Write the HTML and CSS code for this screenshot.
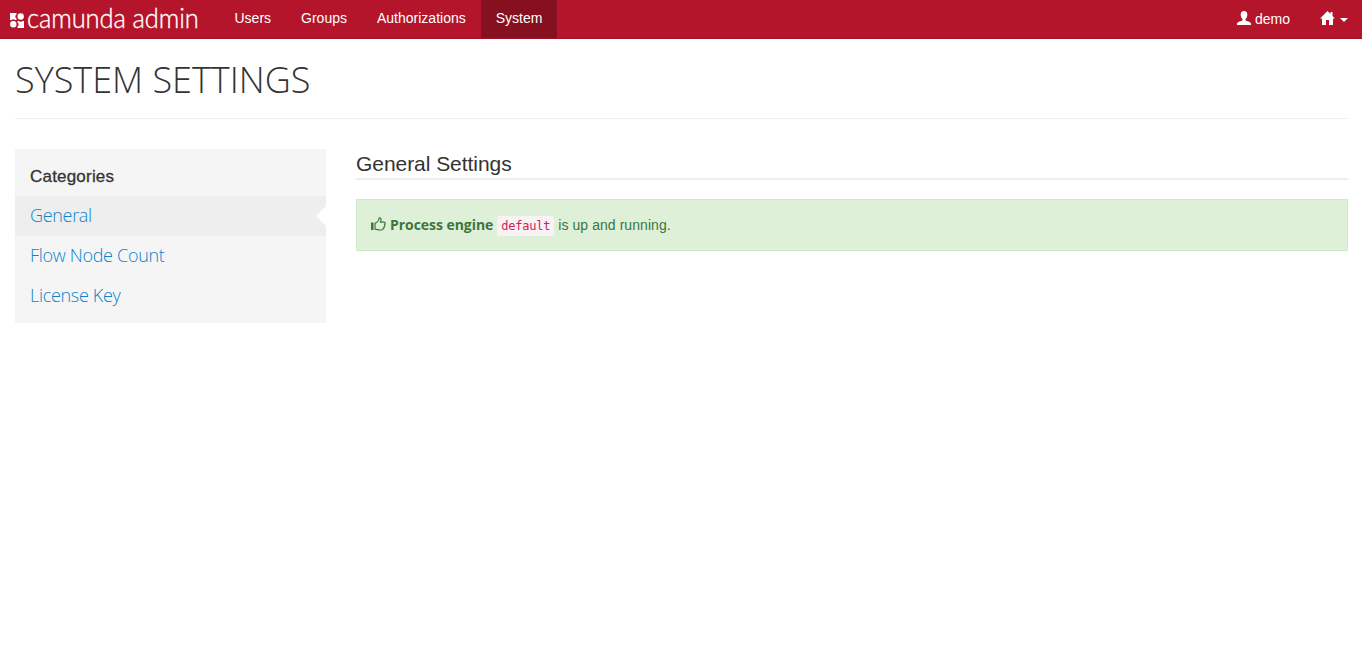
FILE: index.html
```html
<!DOCTYPE html>
<html lang="en">
<head>
<meta charset="utf-8">
<title>camunda admin</title>
<link rel="stylesheet" href="styles.css">
</head>
<body>
<header class="navbar">
  <a class="brand">
    <svg class="brand-mark" viewBox="0 0 14 15" aria-hidden="true">
      <path fill="#fff" d="M0 0h6.500v1.500a2.300 2.300 0 0 0 0 4V7H5A2.500 2.500 0 0 0 1.500 7H0z"/>
      <circle cx="10.700" cy="3.500" r="3.200" fill="#fff"/>
      <circle cx="3.300" cy="11.300" r="3.200" fill="#fff"/>
      <path fill="#fff" d="M7.500 8H9a2.500 2.500 0 0 0 3.500 0H14v7H7.500v-1.500a2.300 2.300 0 0 0 0-4z"/>
    </svg>
    <span class="brand-name">camunda admin</span>
  </a>
  <nav class="nav">
    <a class="nav-link">Users</a>
    <a class="nav-link">Groups</a>
    <a class="nav-link">Authorizations</a>
    <a class="nav-link active">System</a>
  </nav>
  <div class="account">
    <a class="account-link">
      <svg class="icon-user" viewBox="0 0 14 14" aria-hidden="true"><path fill="#fff" d="M7 0C4.800 0 3.700 1.400 3.700 3.500c0 2 .7 3.600 1.800 4.500v1.300C5 10.300 0 10.600 0 12.800V14h14v-1.200c0-2.200-5-2.500-5.500-3.500V8c1.100-.9 1.800-2.500 1.800-4.500C10.300 1.400 9.200 0 7 0z"/></svg>
      <span>demo</span>
    </a>
    <a class="account-link home">
      <svg class="icon-home" viewBox="0 0 15 14" aria-hidden="true"><path fill="#fff" d="M7.500 0 0 7.500h2V14h4V9h3v5h4V7.500h2L12.500 5V1h-2v2z"/></svg>
      <span class="caret"></span>
    </a>
  </div>
</header>
<main class="page">
  <h1 class="page-title">SYSTEM SETTINGS</h1>
  <div class="columns">
    <aside class="sidebar">
      <h5 class="sidebar-title">Categories</h5>
      <a class="sidebar-link active">General</a>
      <a class="sidebar-link">Flow Node Count</a>
      <a class="sidebar-link">License Key</a>
    </aside>
    <section class="content">
      <h3 class="section-title">General Settings</h3>
      <div class="alert">
        <svg class="icon-thumb" viewBox="0 0 15 14" aria-hidden="true"><path fill="#3c763d" d="M0 5.500h2.500V13H0z"/><path fill="none" stroke="#3c763d" stroke-width="1.200" stroke-linejoin="round" d="M4 6.300c1.800-.5 3.900-2.800 4.100-5.200 1.800-.8 2.700 1.300 1.200 4h3.700c1.600 0 1.500 2 .5 2.300.8.800.3 2-.5 2.200.4 1-.2 1.800-.9 1.900 0 1.200-.7 1.500-1.700 1.500H8.500c-1.500 0-2.700-.9-4.500-.9z"/></svg>
        <strong>Process engine</strong>
        <code>default</code>
        <span class="alert-text">is up and running.</span>
      </div>
    </section>
  </div>
</main>
</body>
</html>
```
FILE: styles.css
```css
* { box-sizing: border-box; }
body {
  margin: 0;
  background: #fff;
  color: #333;
  font: 14px/20px "Liberation Sans", Arial, sans-serif;
}
.navbar {
  display: flex;
  height: 39px;
  background: #b5152b;
  border-bottom: 1px solid #a01226;
  color: #fff;
}
.brand {
  display: flex;
  width: 219.500px;
  padding-left: 10px;
}
.brand-mark { width: 14px; height: 15px; margin: 13px 3px 0 0; flex: none; }
.brand-name {
  font: 300 27px/35px Lato, sans-serif;
  letter-spacing: -0.1px;
  white-space: nowrap;
  transform: scaleX(.945);
  transform-origin: 0 0;
  -webkit-text-stroke: .35px #fff;
}
.nav { display: flex; }
.nav-link { padding: 8px 15px 10px; font-size: 14px; }
.nav-link.active { background: #860f20; }
.account { display: flex; margin-left: auto; }
.account-link {
  display: flex;
  gap: 4px;
  padding: 9px 15px;
}
.icon-user { width: 14px; height: 14px; margin-top: 2px; }
.icon-home { width: 15px; height: 14px; margin-top: 2px; }
.home { padding-right: 14px; gap: 5px; }
.caret {
  margin-top: 9px;
  height: 4px;
  border: 4px solid transparent;
  border-top-color: #fff;
  border-bottom: 0;
}
.page { padding: 21px 14px 0 15px; }
.page-title {
  margin: 0 0 30px;
  height: 59px;
  border-bottom: 1px solid #eee;
  font: 300 36px/40px "Open Sans", sans-serif;
}
.columns { display: flex; gap: 30px; }
.sidebar {
  width: 311px;
  height: 174px;
  padding-top: 17px;
  background: #f5f5f5;
}
.sidebar-title {
  margin: 0 0 9px;
  padding-left: 15px;
  font: 500 17px/21px "Liberation Sans", Arial, sans-serif;
  letter-spacing: .2px;
  -webkit-text-stroke: .3px #333;
}
.sidebar-link {
  display: block;
  position: relative;
  height: 40px;
  padding-left: 15px;
  color: #0a84cc;
  font: 300 18px/39px "Open Sans", sans-serif;
  letter-spacing: -.31px;
}
.sidebar-link.active { background: #eee; }
.sidebar-link.active::after {
  content: "";
  position: absolute;
  right: 0;
  top: 10px;
  border: 10px solid transparent;
  border-right-color: #fff;
  border-left: 0;
}
.content { flex: 1; }
.section-title {
  margin: 0 0 19px;
  height: 31px;
  border-bottom: 2px solid #eee;
  font: 400 21px/30px "Liberation Sans", Arial, sans-serif;
  letter-spacing: -.05px;
}
.alert {
  display: flex;
  align-items: center;
  height: 52px;
  padding: 0 14px;
  border: 1px solid #d0e9c6;
  background: #dff0d8;
  color: #3c763d;
}
.icon-thumb { width: 15px; height: 14px; margin-right: 4px; margin-bottom: 2px; }
.alert strong { font: 700 14px/20px "Open Sans", sans-serif; letter-spacing: -.05px; }
.alert code {
  margin: 2px 4px 0;
  padding: 1px 4px;
  border-radius: 2px;
  background: #f9f2f4;
  color: #c7254e;
  font: 12px/18px "DejaVu Sans Mono", monospace;
  letter-spacing: -.22px;
}
.alert-text { letter-spacing: .06px; }
```
